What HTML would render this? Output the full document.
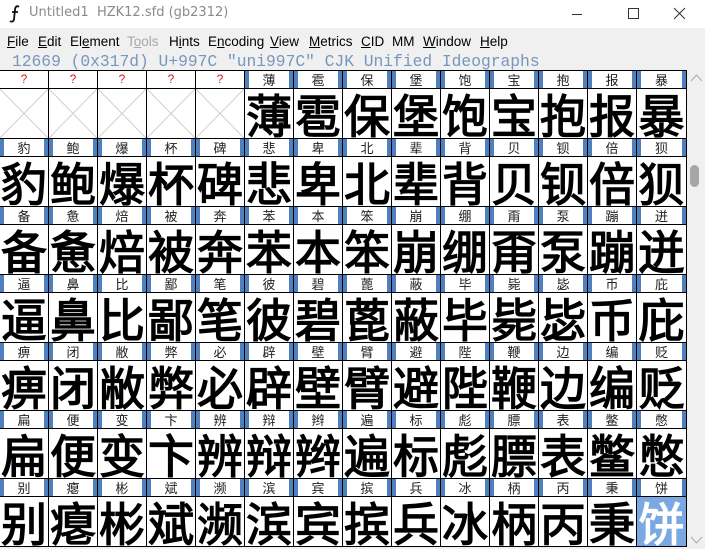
<!DOCTYPE html>
<html><head><meta charset="utf-8"><style>
*{margin:0;padding:0;box-sizing:border-box}
body{width:705px;height:549px;overflow:hidden;background:#f0f0f0;font-family:"Liberation Sans","Noto Sans CJK SC",sans-serif;position:relative}
#title{position:absolute;left:0;top:0;width:705px;height:28px;background:#fff;font-size:14px;color:#888}
#title .t{position:absolute;left:29px;top:5px;font-family:"DejaVu Sans",sans-serif;font-size:13px;color:#8a8a8a}
#menu{position:absolute;left:0;top:30px;height:22px;font-size:13.5px;color:#000;font-family:"Liberation Sans",sans-serif}
#menu span{position:absolute;top:4px;white-space:nowrap}
#info{position:absolute;left:12px;top:52px;font-family:"Liberation Mono",monospace;font-size:16.3px;color:#7796bd;white-space:nowrap}
#grid{position:absolute;left:0;top:70px;width:687px;border-top:1px solid #000;background:#fff}
.row{display:flex}
.c{width:49px;border-right:1px solid #000;flex:none}
.c:last-child{width:50px}
.lab{height:18px;border-bottom:1px solid #000;position:relative;text-align:center;font-size:13px;line-height:17px;color:#222;font-family:"WenQuanYi Zen Hei","Noto Sans CJK SC",sans-serif}
.lab.d::before,.lab.d::after{content:"";position:absolute;top:0;width:4px;height:17px;background:#4f7fbd}
.lab.d::before{left:0}.lab.d::after{right:0}
.lab.q{color:#d02020;font-family:"Liberation Sans",sans-serif;font-size:12px}
.gl{height:50px;border-bottom:1px solid #000;text-align:center;font-size:46px;line-height:50px;font-weight:normal;-webkit-text-stroke:1.3px currentColor;font-family:"WenQuanYi Zen Hei","Noto Sans CJK SC",sans-serif;color:#000;overflow:hidden}
.sel{background:#7aa8e2;color:#fff}
.x{display:block}
#sb{position:absolute;left:688px;top:70px;width:17px;height:479px;background:#f0f0f0}
</style></head><body>
<div id="title">
<svg style="position:absolute;left:7px;top:5px" width="16" height="18" viewBox="0 0 16 18"><path d="M12 2c-2-2-4 0-4 3l-1 9c0 3-3 3-4 2M5 7h6" fill="none" stroke="#111" stroke-width="1.8"/></svg>
<span class="t">Untitled1&nbsp;&nbsp;HZK12.sfd (gb2312)</span>
<svg style="position:absolute;left:572px;top:6px" width="125" height="16"><path d="M0 8.5h10" stroke="#333"/><rect x="56.5" y="2.5" width="10" height="10" fill="none" stroke="#333"/><path d="M102 2l11 11M113 2l-11 11" stroke="#333"/></svg>
</div>
<div id="menu">
<span style="left:7px"><u>F</u>ile</span><span style="left:38px"><u>E</u>dit</span><span style="left:70px">El<u>e</u>ment</span><span style="left:127px;color:#a8a8a8">T<u>o</u>ols</span><span style="left:169px">H<u>i</u>nts</span><span style="left:208px">E<u>n</u>coding</span><span style="left:270px"><u>V</u>iew</span><span style="left:309px"><u>M</u>etrics</span><span style="left:361px"><u>C</u>ID</span><span style="left:392px">MM</span><span style="left:423px"><u>W</u>indow</span><span style="left:480px"><u>H</u>elp</span>
</div>
<div id="info">12669 (0x317d) U+997C "uni997C" CJK Unified Ideographs</div>
<div id="grid">
</div>
<div id="sb">
<svg style="position:absolute;left:2px;top:4px" width="13" height="8"><path d="M1 7L6.5 1L12 7" fill="none" stroke="#aaa"/></svg>
<div style="position:absolute;left:2px;top:95px;width:9px;height:22px;border-radius:5px;background:#a6a6a6"></div>
<svg style="position:absolute;left:2px;top:466px" width="13" height="8"><path d="M1 1L6.5 7L12 1" fill="none" stroke="#aaa"/></svg>
</div>
<script>
var rows=["?????薄雹保堡饱宝抱报暴","豹鲍爆杯碑悲卑北辈背贝钡倍狈","备惫焙被奔苯本笨崩绷甭泵蹦迸","逼鼻比鄙笔彼碧蓖蔽毕毙毖币庇","痹闭敝弊必辟壁臂避陛鞭边编贬","扁便变卞辨辩辫遍标彪膘表鳖憋","别瘪彬斌濒滨宾摈兵冰柄丙秉饼"];
var h="";
rows.forEach(function(r,ri){
 var chars=Array.from(r);
 h+='<div class="row">';
 chars.forEach(function(ch){h+=ch=="?"?'<div class="c"><div class="lab q">?</div></div>':'<div class="c"><div class="lab d">'+ch+'</div></div>';});
 h+='</div><div class="row">';
 chars.forEach(function(ch,ci){
  if(ch=="?")h+='<div class="c"><div class="gl"><svg class="x" width="48" height="49"><path d="M0 0L48 49M48 0L0 49" stroke="#d0d0d0"/></svg></div></div>';
  else h+='<div class="c"><div class="gl'+(ri==6&&ci==13?' sel':'')+'">'+ch+'</div></div>';
 });
 h+='</div>';
});
document.getElementById("grid").innerHTML=h;
</script>
</body></html>
